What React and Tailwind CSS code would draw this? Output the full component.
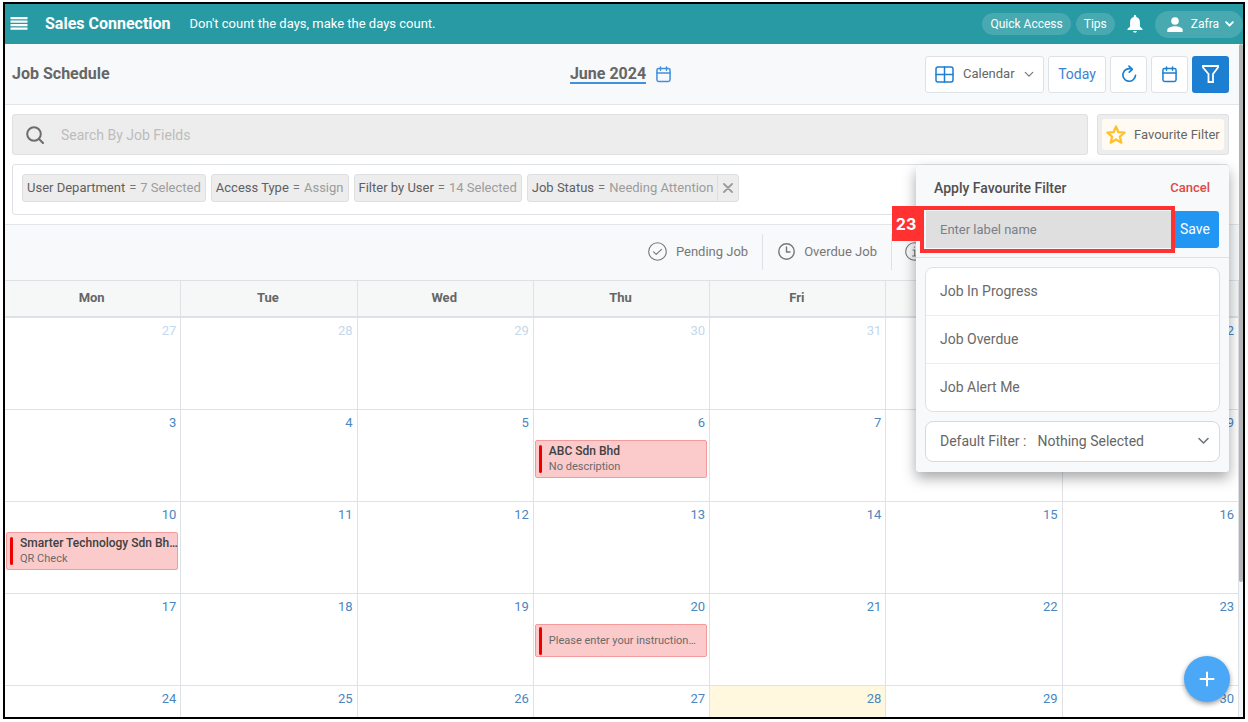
import React from "react";

const WEEKDAYS = ["Mon", "Tue", "Wed", "Thu", "Fri", "Sat", "Sun"];

const WEEKS = [
  [27, 28, 29, 30, 31, 1, 2],
  [3, 4, 5, 6, 7, 8, 9],
  [10, 11, 12, 13, 14, 15, 16],
  [17, 18, 19, 20, 21, 22, 23],
  [24, 25, 26, 27, 28, 29, 30],
];

const EVENTS = {
  "1-6": { title: "ABC Sdn Bhd", text: "No description" },
  "2-10": { title: "Smarter Technology Sdn Bh…", text: "QR Check" },
  "3-20": { text: "Please enter your instruction…" },
};

const FILTERS = [
  { name: "User Department", value: "7 Selected" },
  { name: "Access Type", value: "Assign" },
  { name: "Filter by User", value: "14 Selected" },
  { name: "Job Status", value: "Needing Attention", removable: true },
];

const FAVOURITES = ["Job In Progress", "Job Overdue", "Job Alert Me"];

function Icon({ className, children, width = 1.5, viewBox = "0 0 24 24" }) {
  return (
    <svg
      className={className}
      viewBox={viewBox}
      fill="none"
      stroke="currentColor"
      strokeWidth={width}
      strokeLinecap="round"
      strokeLinejoin="round"
      aria-hidden="true"
    >
      {children}
    </svg>
  );
}

function CalendarIcon({ className }) {
  return (
    <Icon className={className} viewBox="0 0 16 18" width={1.6}>
      <rect x="1" y="2.500" width="14" height="14" rx="1.8" />
      <path d="M1 7.500h14M4.800 1v3.500M11.200 1v3.500" />
    </Icon>
  );
}

function ChevronDown({ className, width = 2 }) {
  return (
    <Icon className={className} viewBox="0 0 12 8" width={width}>
      <path d="M1.5 1.5 6 6l4.5-4.5" />
    </Icon>
  );
}

function Header() {
  return (
    <header className="flex h-10 shrink-0 items-center bg-[#289aa4] pl-[5px] text-white">
      <button aria-label="Menu" className="flex">
        <svg className="h-3.5 w-[18px]" viewBox="0 0 18 14" fill="currentColor" aria-hidden="true">
          <path d="M.5 0h17v2.200H.5zM.5 3.500h17v2.200H.5zM.5 7h17v2.200H.5zM.5 10.500h17v2.200H.5z" />
        </svg>
      </button>
      <h1 className="ml-[17px] text-base font-bold">Sales Connection</h1>
      <p className="ml-[19px] text-[13px]">Don't count the days, make the days count.</p>
      <div className="ml-auto flex items-center text-xs">
        <button className="h-[22px] rounded-full bg-white/15 px-2">Quick Access</button>
        <button className="ml-[5px] h-[22px] rounded-full bg-white/15 px-2">Tips</button>
        <button aria-label="Notifications" className="ml-3 flex">
          <svg className="h-[18px] w-4" viewBox="0 0 16 18" fill="currentColor" aria-hidden="true">
            <path d="M8 0a1.200 1.200 0 0 1 1.200 1.300v.6c2.400.6 3.700 2.600 3.700 5v4.600l2.600 2.600v.9H.5v-.9l2.600-2.600V6.900c0-2.400 1.300-4.400 3.700-5v-.6A1.200 1.200 0 0 1 8 0ZM6.200 16h3.600A1.800 1.800 0 0 1 8 17.800 1.800 1.800 0 0 1 6.200 16Z" />
          </svg>
        </button>
        <button className="ml-3 flex h-[27px] items-center rounded-full bg-white/15 pr-[9px] pl-3">
          <svg className="h-[15px] w-4" viewBox="0 0 16 15" fill="currentColor" aria-hidden="true">
            <circle cx="8" cy="4" r="3.8" />
            <path d="M.3 15v-2C.3 10.400 5 9.300 8 9.300s7.700 1.100 7.700 3.700v2Z" />
          </svg>
          <span className="ml-2">Zafra</span>
          <ChevronDown className="ml-1.5 h-1.5 w-[9px]" width={2.4} />
        </button>
      </div>
    </header>
  );
}

const toolButton =
  "flex h-[37px] items-center justify-center rounded-[3px] border border-[#dee2e6] bg-white text-[#1d7fd1]";

function Toolbar() {
  return (
    <div className="grid h-[61px] grid-cols-[1fr_auto_1fr] items-center border-b border-[#e3e6e9] bg-[#f8f9fb] pr-2.5 pl-[7px]">
      <h2 className="text-base font-bold text-[#666]">Job Schedule</h2>
      <button className="flex items-center gap-2.5 text-[#4290dc]">
        <span className="border-b-2 border-[#4290dc] text-base leading-[17px] font-bold text-[#666]">June 2024</span>
        <CalendarIcon className="h-[17px] w-[15px]" />
      </button>
      <div className="flex justify-end gap-1">
        <div className="relative flex h-[37px] w-[119px] items-center rounded-[3px] border border-[#dee2e6] bg-white">
          <Icon className="ml-[9px] h-[17px] w-[19px] shrink-0 text-[#1d7fd1]" viewBox="0 0 19 17" width={1.5}>
            <rect x="1" y="1" width="17" height="15" rx="2" />
            <path d="M9.500 1v15M1 8.500h17" />
          </Icon>
          <select aria-label="View" className="ml-[9px] min-w-0 flex-1 appearance-none bg-transparent text-[13px] text-[#666]">
            <option>Calendar</option>
          </select>
          <ChevronDown className="pointer-events-none absolute right-[9px] h-[7px] w-2.5 text-[#777]" width={1.4} />
        </div>
        <button className={toolButton + " w-[58px] text-sm text-[#3b82d0]"}>Today</button>
        <button aria-label="Refresh" className={toolButton + " w-[37px]"}>
          <Icon className="h-[18px] w-4" viewBox="0 0 16 18" width={1.7}>
            <path d="M14.500 10.300A6.300 6.300 0 1 1 11 4.300M8 1.200l3.300 3.100L8.300 7.200" />
          </Icon>
        </button>
        <button aria-label="Pick date" className={toolButton + " w-[37px]"}>
          <CalendarIcon className="h-[17px] w-[15px]" />
        </button>
        <button aria-label="Filter" className="flex h-[37px] w-[37px] items-center justify-center rounded-[3px] bg-[#1d7fd1] text-white">
          <svg className="h-[18px] w-[17px]" viewBox="0 0 17 18" fill="none" stroke="currentColor" strokeWidth="1.800" aria-hidden="true">
            <path d="M1 1h15v1.500L11 9v8H6.500V9L1 2.500Z" />
          </svg>
        </button>
      </div>
    </div>
  );
}

function FavouritePanel() {
  return (
    <section
      aria-label="Apply Favourite Filter"
      className="absolute top-full -right-px z-10 mt-[11px] w-[313px] rounded-[3px] bg-[#f8f9fb] pb-2.5 shadow-[0_6px_14px_rgba(0,0,0,0.35)]"
    >
      <div className="flex h-[46px] items-center justify-between pr-[19px] pl-[18px] font-medium">
        <h3 className="text-sm text-[#505050]">Apply Favourite Filter</h3>
        <button className="text-[13px] text-[#dc4a44]">Cancel</button>
      </div>
      <div className="relative flex border-b border-[#dee2e6] px-2.5 pb-[9px]">
        <input
          aria-label="Label name"
          placeholder="Enter label name"
          className="h-[37px] min-w-0 flex-1 bg-[#dfdfdf] px-3.5 text-[13px] placeholder:text-[#7a8088]"
        />
        <button className="h-[37px] w-12 rounded-r-[3px] bg-[#2196f3] pb-0.5 text-sm text-white">Save</button>
        <div className="pointer-events-none absolute -top-[5px] left-1 h-[47px] w-[255px] border-4 border-[#ff3131]" />
        <div className="absolute -top-[5px] -left-6 flex h-[35px] w-7 items-center justify-center bg-[#ff3131] font-[Inter,sans-serif] text-base font-bold text-white">
          23
        </div>
      </div>
      <ul className="mx-[9px] mt-[9px] divide-y divide-[#eceef0] rounded-lg border border-[#dee2e6] bg-white">
        {FAVOURITES.map((name) => (
          <li key={name}>
            <button className="flex h-[47px] w-full items-center px-3.5 pb-0.5 text-sm text-[#6a6a6a]">{name}</button>
          </li>
        ))}
      </ul>
      <div className="relative mx-[9px] mt-[9px] flex h-[41px] items-center rounded-lg border border-[#d5dadf] bg-white pr-2.5 pb-0.5 pl-3.5 text-sm text-[#666]">
        <label htmlFor="default-filter">Default Filter :</label>
        <select id="default-filter" className="ml-[11px] min-w-0 flex-1 appearance-none bg-transparent">
          <option>Nothing Selected</option>
        </select>
        <ChevronDown className="pointer-events-none absolute right-[9px] h-2 w-[13px] text-[#6c757d]" width={1.6} />
      </div>
    </section>
  );
}

function SearchRow() {
  return (
    <div className="flex gap-[9px] pt-[9px] pr-2.5 pl-[7px]">
      <label className="flex h-[41px] flex-1 items-center rounded-[3px] border border-[#dee0e2] bg-[#ededed] pl-[13px]">
        <Icon className="h-[18px] w-[18px] text-[#6c6c6c]" viewBox="0 0 18 18" width={2}>
          <circle cx="8" cy="8" r="6.800" />
          <path d="m13 13 4 4" />
        </Icon>
        <input
          aria-label="Search By Job Fields"
          placeholder="Search By Job Fields"
          className="ml-[17px] min-w-0 flex-1 bg-transparent text-sm outline-none placeholder:text-[#bcbcbc]"
        />
      </label>
      <div className="relative w-[132px] rounded-[3px] border border-[#dee0e2] bg-[#ededed] p-1">
        <button className="flex h-full w-full items-center gap-2 rounded-[3px] bg-[#fffbf2] px-1 text-[13px] whitespace-nowrap text-[#666]">
          <Icon className="h-[19px] w-5 shrink-0 text-[#ffc02e]" viewBox="0 0 20 19" width={2.2}>
            <path d="m10 1.500 2.400 5.700 6.200.5-4.700 4 1.500 6-5.400-3.200-5.400 3.200 1.500-6-4.700-4 6.200-.5Z" />
          </Icon>
          Favourite Filter
        </button>
        <FavouritePanel />
      </div>
    </div>
  );
}

function FilterBar() {
  return (
    <div className="mt-[9px] mr-2.5 ml-[7px] flex h-[51px] gap-[5px] rounded-[3px] border border-[#dee2e6] pt-[9px] pl-[9px]">
      {FILTERS.map((f) => (
        <div key={f.name} className="flex h-7 rounded-[3px] border border-[#dddfe1] bg-[#ededed] text-[13px] text-[#9c9c9c]">
          <button className="px-1 whitespace-nowrap">
            <span className="text-[#606060]">{f.name}</span>
            <span className="mx-1 text-[#777]">=</span>
            {f.value}
          </button>
          {f.removable && (
            <button aria-label="Remove filter" className="flex w-[21px] items-center justify-center border-l border-[#dddfe1]">
              <Icon className="h-2.5 w-2.5" viewBox="0 0 10 10" width={1.800}>
                <path d="m1 1 8 8M9 1 1 9" />
              </Icon>
            </button>
          )}
        </div>
      ))}
    </div>
  );
}

function Legend() {
  return (
    <div className="mt-[9px] flex h-14 items-center justify-end border-t border-[#e3e6e9] bg-[#f8f9fb] pb-0.5 text-[13px] text-[#777]">
      <div className="flex h-9 items-center gap-[9px] pr-3.5">
        <Icon className="h-[19px] w-[19px]" viewBox="0 0 19 19" width={1.100}>
          <circle cx="9.500" cy="9.500" r="8.800" />
          <path d="m5.500 9.800 2.700 2.500 5.300-5" />
        </Icon>
        Pending Job
      </div>
      <div className="flex h-9 items-center gap-[9px] border-l border-[#dee2e6] pr-3.5 pl-[15px]">
        <Icon className="h-[17px] w-[17px]" viewBox="0 0 17 17" width={1.400}>
          <circle cx="8.500" cy="8.500" r="7.700" />
          <path d="M8.500 4v5H12" />
        </Icon>
        Overdue Job
      </div>
      <div className="flex h-9 w-[348px] items-center border-l border-[#dee2e6] pl-[13px]">
        <Icon className="h-[19px] w-[19px]" viewBox="0 0 19 19" width={1.100}>
          <circle cx="9.500" cy="9.500" r="8.800" />
          <path d="M8 8h1.700v6M7.500 14h4.500M9.400 5v.3" />
        </Icon>
      </div>
    </div>
  );
}

function Event({ title, text }) {
  return (
    <button
      className={
        "mr-[2px] ml-px flex rounded-[2px] border border-[#f59a9a] bg-[#fbcaca] pl-[3px] text-left text-[11px] leading-4 text-[#6a6a6a] " +
        (title ? "h-[38px] py-1" : "h-[33px] py-0.5")
      }
    >
      <span className="h-7 w-[3px] shrink-0 rounded-full bg-[#ee0000]" />
      <span className={"ml-[7px] whitespace-nowrap" + (title ? " -my-[2px]" : " self-center")}>
        {title && <span className="block text-xs leading-4 font-medium text-[#404040]">{title}</span>}
        <span className="block">{text}</span>
      </span>
    </button>
  );
}

function Calendar() {
  return (
    <table className="w-full table-fixed border-separate border-spacing-0">
      <thead>
        <tr>
          {WEEKDAYS.map((d) => (
            <th
              key={d}
              className="h-[38px] border-t border-r border-b-2 border-[#dee2e6] bg-[#f6f8f8] p-0 pr-0.5 pb-0.5 text-[13px] font-bold text-[#666]"
            >
              {d}
            </th>
          ))}
        </tr>
      </thead>
      <tbody>
        {WEEKS.map((week, w) => (
          <tr key={w}>
            {week.map((day) => {
              const event = EVENTS[w + "-" + day];
              const outside = w === 0 && day > 20;
              const today = w === 4 && day === 28;
              return (
                <td
                  key={day}
                  className={
                    "h-[92px] border-r border-b border-[#dee2e6] p-0 align-top " + (today ? "bg-[#fff7de]" : "")
                  }
                >
                  <div className="flex flex-col">
                    <span
                      className={
                        "h-[30px] pt-[3px] pr-1 text-right text-[13px] leading-5 " +
                        (outside ? "text-[#c3d8ec]" : "text-[#4a86c0]")
                      }
                    >
                      {day}
                    </span>
                    {event && <Event {...event} />}
                  </div>
                </td>
              );
            })}
          </tr>
        ))}
      </tbody>
    </table>
  );
}

export default function App() {
  return (
    <div className="h-screen bg-white px-[3px] pt-[2px] pb-[3px] font-[Roboto,sans-serif]">
      <div className="relative flex h-full flex-col overflow-hidden border-2 border-black">
        <Header />
        <div className="flex min-h-0 flex-1">
          <main className="min-w-0 flex-1 overflow-hidden">
            <Toolbar />
            <SearchRow />
            <FilterBar />
            <Legend />
            <Calendar />
          </main>
          <div className="w-1 bg-[#f3f5f7]">
            <div className="h-[80%] rounded-full bg-[#b4b4b4]" />
          </div>
        </div>
        <button
          aria-label="Add job"
          className="absolute right-[13px] bottom-[15px] flex h-[46px] w-[46px] items-center justify-center rounded-full bg-[#4aa8f7] text-white shadow-[0_2px_5px_rgba(0,0,0,0.4)]"
        >
          <Icon className="h-4 w-4" viewBox="0 0 16 16" width={2}>
            <path d="M8 1.500v13M1.500 8h13" />
          </Icon>
        </button>
      </div>
    </div>
  );
}
